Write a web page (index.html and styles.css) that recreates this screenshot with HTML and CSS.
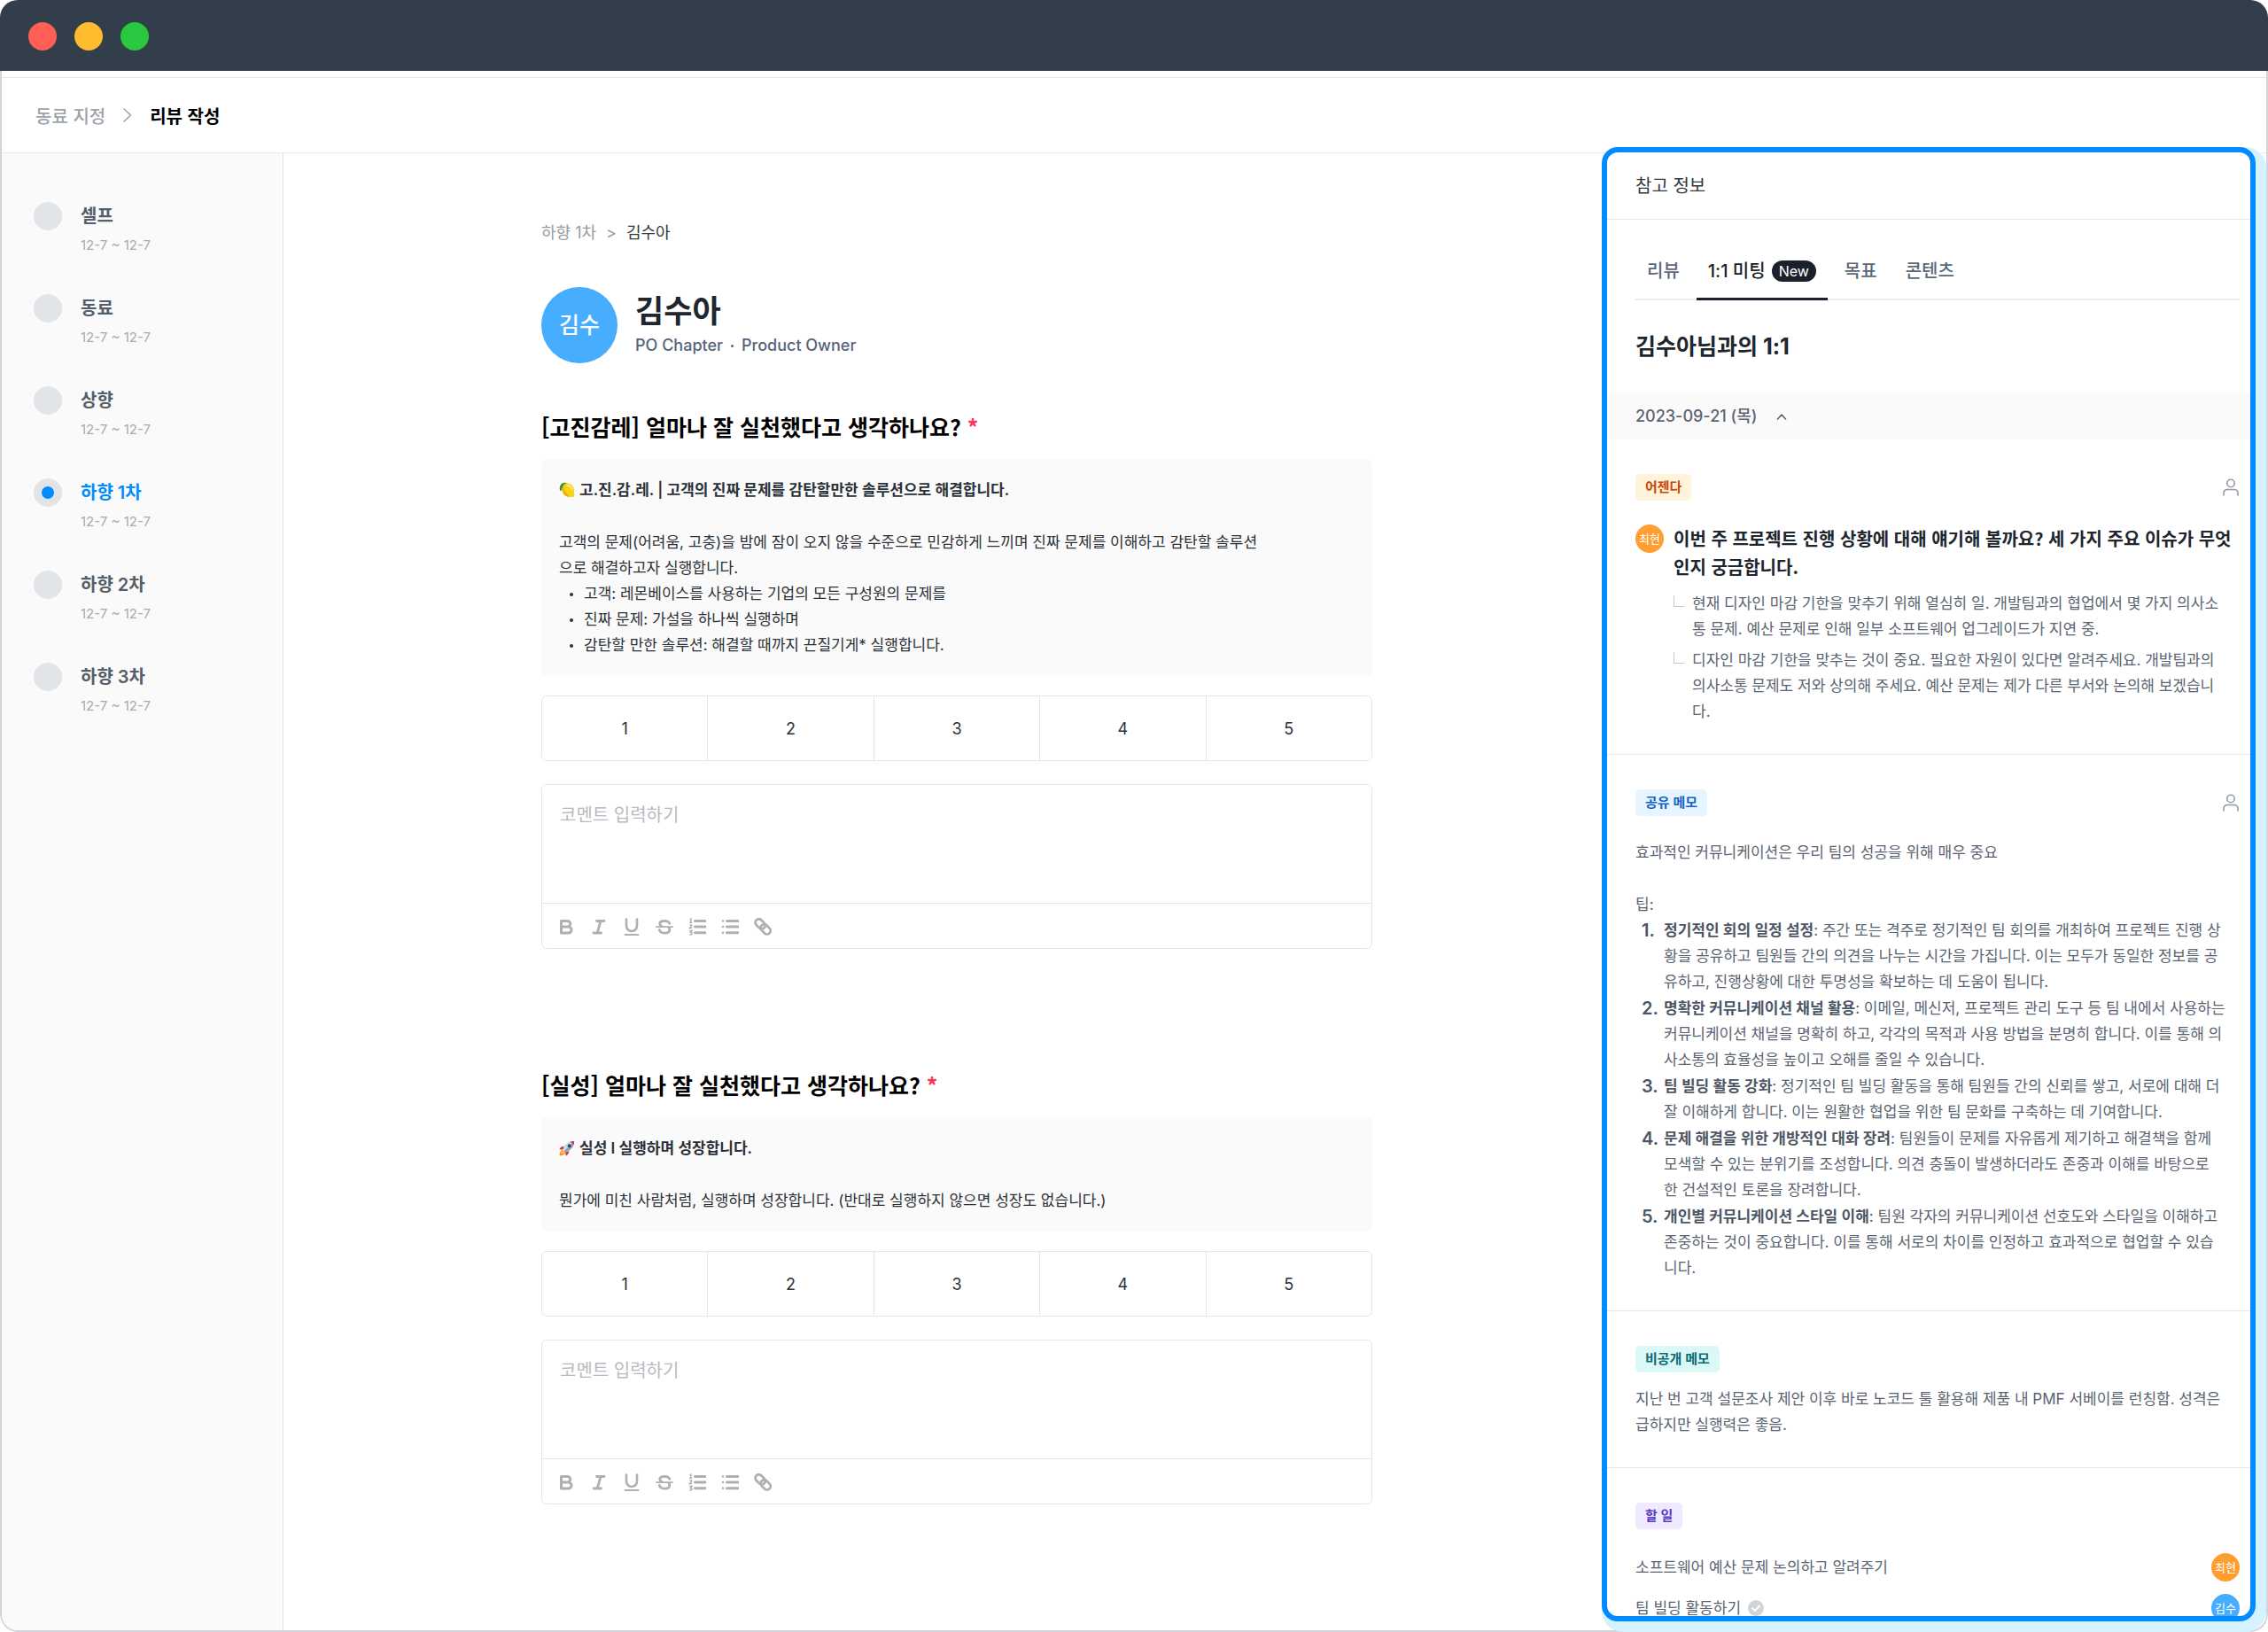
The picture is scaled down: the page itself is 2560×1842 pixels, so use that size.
FILE: index.html
```html
<!DOCTYPE html>
<html lang="ko">
<head>
    <meta charset="UTF-8">
    <meta name="viewport" content="width=device-width, initial-scale=1.0">
    <title>리뷰 작성</title>
    <link rel="stylesheet" href="styles.css">
</head>
<body>

    <!-- 공용 아이콘 -->
    <svg class="sprite" aria-hidden="true">
        <symbol id="icon-bold" viewBox="0 0 20 20"><path d="M4.500 3.500h7a3.300 3.300 0 0 1 0 6.600h-7zM4.500 10.100h8a3.500 3.500 0 0 1 0 7h-8z" fill="none" stroke="currentColor" stroke-width="3" stroke-linejoin="round"/></symbol>
        <symbol id="icon-italic" viewBox="0 0 20 20"><path d="M7.500 3.500h8.500M4 17h8.500M12 3.500L8.200 17" fill="none" stroke="currentColor" stroke-width="2.800" stroke-linecap="round"/></symbol>
        <symbol id="icon-underline" viewBox="0 0 20 20"><path d="M4 1.500v7.500a6 6 0 0 0 12 0V1.500" fill="none" stroke="currentColor" stroke-width="2.600" stroke-linecap="round"/><path d="M2.500 19h15" stroke="currentColor" stroke-width="1.800" stroke-linecap="round"/></symbol>
        <symbol id="icon-strike" viewBox="0 0 20 20"><path d="M15.800 6.200C15 4.200 12.900 3.300 10.200 3.300 7 3.300 4.700 4.500 4.700 6.500c0 1.200.7 2.200 2 2.800M4.300 13.500c.6 2.300 2.900 3.600 5.900 3.600 3.200 0 5.600-1.400 5.600-3.700 0-.8-.2-1.400-.7-1.900" fill="none" stroke="currentColor" stroke-width="2.800" stroke-linecap="round"/><path d="M1 10.200h18" stroke="currentColor" stroke-width="1.800" stroke-linecap="round"/></symbol>
        <symbol id="icon-ol" viewBox="0 0 20 20"><path d="M7.500 3.500H19M7.500 10H19M7.500 16.800H19" stroke="currentColor" stroke-width="3" stroke-linecap="round"/><path d="M1.500 1.600l1.300-.6v4M1.200 5.200h3M1.300 8.200c1.300-.8 2.600-.2 2.500.8-.1.900-1.500 1.400-2.500 2.600H4M1.300 14.500H4l-1.500 1.800c2.300 0 2 2.700-.1 2.700-.5 0-.9-.1-1.200-.4" fill="none" stroke="currentColor" stroke-width="1.400"/></symbol>
        <symbol id="icon-ul" viewBox="0 0 20 20"><path d="M6.500 3.500H19M6.500 10H19M6.500 16.800H19" stroke="currentColor" stroke-width="3" stroke-linecap="round"/><circle cx="2" cy="3.500" r="1.300" fill="currentColor"/><circle cx="2" cy="10" r="1.300" fill="currentColor"/><circle cx="2" cy="16.800" r="1.300" fill="currentColor"/></symbol>
        <symbol id="icon-link" viewBox="0 0 20 20"><g transform="rotate(45 10 10)" fill="none" stroke="currentColor" stroke-width="2.800"><rect x="-.5" y="5.800" width="12.500" height="8" rx="4"/><rect x="8" y="5.800" width="12.500" height="8" rx="4"/></g></symbol>
        <symbol id="icon-person" viewBox="0 0 20 20"><circle cx="10" cy="5.500" r="4.200" fill="none" stroke="currentColor" stroke-width="1.600"/><path d="M2 19v-2.500a4 4 0 0 1 4-4h8a4 4 0 0 1 4 4V19" fill="none" stroke="currentColor" stroke-width="1.600" stroke-linecap="round"/></symbol>
    </svg>

    <div class="window">
        <div class="title-bar">
            <span class="light red"></span>
            <span class="light yellow"></span>
            <span class="light green"></span>
        </div>

        <div class="app">
            <header class="header">
                <a href="#" class="header-link">동료 지정</a>
                <svg class="header-arrow" viewBox="0 0 10 16"><path d="M1 1l7.500 7L1 15" fill="none" stroke="currentColor" stroke-width="1.600" stroke-linecap="round" stroke-linejoin="round"/></svg>
                <h1>리뷰 작성</h1>
            </header>

            <div class="layout">
                <nav class="sidebar">
                    <a href="#" class="step"><span class="step-dot"></span><span class="step-name">셀프</span><span class="step-date">12-7 ~ 12-7</span></a>
                    <a href="#" class="step"><span class="step-dot"></span><span class="step-name">동료</span><span class="step-date">12-7 ~ 12-7</span></a>
                    <a href="#" class="step"><span class="step-dot"></span><span class="step-name">상향</span><span class="step-date">12-7 ~ 12-7</span></a>
                    <a href="#" class="step active"><span class="step-dot"></span><span class="step-name">하향 1차</span><span class="step-date">12-7 ~ 12-7</span></a>
                    <a href="#" class="step"><span class="step-dot"></span><span class="step-name">하향 2차</span><span class="step-date">12-7 ~ 12-7</span></a>
                    <a href="#" class="step"><span class="step-dot"></span><span class="step-name">하향 3차</span><span class="step-date">12-7 ~ 12-7</span></a>
                </nav>

                <main class="main">
                    <div class="column">
                        <div class="breadcrumb"><a href="#">하향 1차</a><span>&gt;</span><strong>김수아</strong></div>

                        <div class="profile">
                            <span class="avatar large">김수</span>
                            <div>
                                <div class="profile-name">김수아</div>
                                <div class="profile-role"><span>PO Chapter</span><i></i><span>Product Owner</span></div>
                            </div>
                        </div>

                        <section class="question">
                            <h2>[고진감레] 얼마나 잘 실천했다고 생각하나요? <span class="required">*</span></h2>
                            <div class="guide">
                                <h3>
                                    <svg class="emoji" viewBox="0 0 20 20"><path d="M9.500 1.200C7 .2 4 .8 2.500 3 .5 5.500.3 8.500 1.500 11.500 3 11 4 9 5 7z" fill="#3f8f35"/><path d="M6 3.500C8.500 1 13.500 1.200 16.500 4.500c2.200 2.400 2.800 6 2.300 9.500.8 1.500.7 3.500-.5 4.500-1.300.8-2.600.6-3.800.1C10 19 6.500 17 4.800 13.500 3.200 10 3.500 6 6 3.500z" fill="#fbd21c"/><path d="M4.800 13.500C3.200 10 3.500 6 6 3.500c-.8 5 2.500 10.500 8.500 15.100C10 19 6.500 17 4.800 13.500z" fill="#eeb20f"/><path d="M11 4.500c2.500.3 4.500 2 5 4.500" stroke="#fff3a8" stroke-width="1.600" fill="none" stroke-linecap="round"/></svg>
                                    고.진.감.레. | 고객의 진짜 문제를 감탄할만한 솔루션으로 해결합니다.
                                </h3>
                                <p>고객의 문제(어려움, 고충)을 밤에 잠이 오지 않을 수준으로 민감하게 느끼며 진짜 문제를 이해하고 감탄할 솔루션<br>으로 해결하고자 실행합니다.</p>
                                <ul>
                                    <li>고객: 레몬베이스를 사용하는 기업의 모든 구성원의 문제를</li>
                                    <li>진짜 문제: 가설을 하나씩 실행하며</li>
                                    <li>감탄할 만한 솔루션: 해결할 때까지 끈질기게* 실행합니다.</li>
                                </ul>
                            </div>
                            <div class="rating" role="radiogroup" aria-label="고진감레 점수">
                                <label><input type="radio" name="score1">1</label>
                                <label><input type="radio" name="score1">2</label>
                                <label><input type="radio" name="score1">3</label>
                                <label><input type="radio" name="score1">4</label>
                                <label><input type="radio" name="score1">5</label>
                            </div>
                            <div class="editor">
                                <textarea placeholder="코멘트 입력하기" aria-label="고진감레 코멘트"></textarea>
                                <div class="toolbar">
                                    <button type="button" aria-label="굵게"><svg><use href="#icon-bold"/></svg></button>
                                    <button type="button" aria-label="기울임"><svg><use href="#icon-italic"/></svg></button>
                                    <button type="button" aria-label="밑줄"><svg><use href="#icon-underline"/></svg></button>
                                    <button type="button" aria-label="취소선"><svg><use href="#icon-strike"/></svg></button>
                                    <button type="button" aria-label="번호 목록"><svg><use href="#icon-ol"/></svg></button>
                                    <button type="button" aria-label="글머리 목록"><svg><use href="#icon-ul"/></svg></button>
                                    <button type="button" aria-label="링크"><svg><use href="#icon-link"/></svg></button>
                                </div>
                            </div>
                        </section>

                        <section class="question">
                            <h2>[실성] 얼마나 잘 실천했다고 생각하나요? <span class="required">*</span></h2>
                            <div class="guide">
                                <h3>
                                    <svg class="emoji" viewBox="0 0 20 20"><path d="M6 7.500C3.500 7.500 1.500 9 .5 11.500l5 .5zM12.500 14c0 2.500-1.500 4.500-4 5.500L8 14.500z" fill="#d9303a"/><path d="M4 12c-2 1.500-3.500 4-3.500 7.500 3-.2 6-1.500 7.500-3.500z" fill="#ff8a1e"/><path d="M4.500 13.500c-1 1-1.700 2-1.700 3.700 1.700-.1 2.700-.7 3.700-1.700z" fill="#ffd93b"/><path d="M19 1c-5 0-9 2-12 6.500L4.500 12 8 15.500l4.500-2.500C17 10 19 6 19 1z" fill="#8fa1b3"/><path d="M19 1c-5 0-9 2-12 6.500L4.500 12l1.700 1.700z" fill="#cddae5"/><path d="M19 1c-1.800 0-3.300.2-4.800.7l4.100 4.100c.5-1.500.7-3 .7-4.800z" fill="#d9303a"/><circle cx="13" cy="7" r="2.200" fill="#28496f"/></svg>
                                    실성 I 실행하며 성장합니다.
                                </h3>
                                <p>뭔가에 미친 사람처럼, 실행하며 성장합니다. (반대로 실행하지 않으면 성장도 없습니다.)</p>
                            </div>
                            <div class="rating" role="radiogroup" aria-label="실성 점수">
                                <label><input type="radio" name="score2">1</label>
                                <label><input type="radio" name="score2">2</label>
                                <label><input type="radio" name="score2">3</label>
                                <label><input type="radio" name="score2">4</label>
                                <label><input type="radio" name="score2">5</label>
                            </div>
                            <div class="editor">
                                <textarea placeholder="코멘트 입력하기" aria-label="실성 코멘트"></textarea>
                                <div class="toolbar">
                                    <button type="button" aria-label="굵게"><svg><use href="#icon-bold"/></svg></button>
                                    <button type="button" aria-label="기울임"><svg><use href="#icon-italic"/></svg></button>
                                    <button type="button" aria-label="밑줄"><svg><use href="#icon-underline"/></svg></button>
                                    <button type="button" aria-label="취소선"><svg><use href="#icon-strike"/></svg></button>
                                    <button type="button" aria-label="번호 목록"><svg><use href="#icon-ol"/></svg></button>
                                    <button type="button" aria-label="글머리 목록"><svg><use href="#icon-ul"/></svg></button>
                                    <button type="button" aria-label="링크"><svg><use href="#icon-link"/></svg></button>
                                </div>
                            </div>
                        </section>
                    </div>
                </main>

                <aside class="panel">
                    <div class="panel-header">참고 정보</div>

                    <div class="tabs">
                        <button type="button" class="tab">리뷰</button>
                        <button type="button" class="tab active">1:1 미팅 <span class="badge">New</span></button>
                        <button type="button" class="tab">목표</button>
                        <button type="button" class="tab">콘텐츠</button>
                    </div>

                    <h2 class="panel-title">김수아님과의 1:1</h2>

                    <button type="button" class="date-row">
                        2023-09-21 (목)
                        <svg viewBox="0 0 12 8"><path d="M1.500 7L6 2l4.500 5" fill="none" stroke="currentColor" stroke-width="1.600" stroke-linecap="round" stroke-linejoin="round"/></svg>
                    </button>

                    <section class="memo">
                        <div class="memo-top">
                            <span class="tag orange">어젠다</span>
                            <svg class="person"><use href="#icon-person"/></svg>
                        </div>
                        <div class="agenda">
                            <span class="avatar small orange">최현</span>
                            <div>
                                <h3>이번 주 프로젝트 진행 상황에 대해 얘기해 볼까요? 세 가지 주요 이슈가 무엇<br>인지 궁금합니다.</h3>
                                <ul class="replies">
                                    <li>현재 디자인 마감 기한을 맞추기 위해 열심히 일. 개발팀과의 협업에서 몇 가지 의사소<br>통 문제. 예산 문제로 인해 일부 소프트웨어 업그레이드가 지연 중.</li>
                                    <li>디자인 마감 기한을 맞추는 것이 중요. 필요한 자원이 있다면 알려주세요. 개발팀과의<br>의사소통 문제도 저와 상의해 주세요. 예산 문제는 제가 다른 부서와 논의해 보겠습니<br>다.</li>
                                </ul>
                            </div>
                        </div>
                    </section>

                    <section class="memo">
                        <div class="memo-top">
                            <span class="tag blue">공유 메모</span>
                            <svg class="person"><use href="#icon-person"/></svg>
                        </div>
                        <p class="intro">효과적인 커뮤니케이션은 우리 팀의 성공을 위해 매우 중요</p>
                        <p>팁:</p>
                        <ol class="tips">
                            <li><div><strong>정기적인 회의 일정 설정</strong>: 주간 또는 격주로 정기적인 팀 회의를 개최하여 프로젝트 진행 상<br>황을 공유하고 팀원들 간의 의견을 나누는 시간을 가집니다. 이는 모두가 동일한 정보를 공<br>유하고, 진행상황에 대한 투명성을 확보하는 데 도움이 됩니다.</div></li>
                            <li><div><strong>명확한 커뮤니케이션 채널 활용</strong>: 이메일, 메신저, 프로젝트 관리 도구 등 팀 내에서 사용하는<br>커뮤니케이션 채널을 명확히 하고, 각각의 목적과 사용 방법을 분명히 합니다. 이를 통해 의<br>사소통의 효율성을 높이고 오해를 줄일 수 있습니다.</div></li>
                            <li><div><strong>팀 빌딩 활동 강화</strong>: 정기적인 팀 빌딩 활동을 통해 팀원들 간의 신뢰를 쌓고, 서로에 대해 더<br>잘 이해하게 합니다. 이는 원활한 협업을 위한 팀 문화를 구축하는 데 기여합니다.</div></li>
                            <li><div><strong>문제 해결을 위한 개방적인 대화 장려</strong>: 팀원들이 문제를 자유롭게 제기하고 해결책을 함께<br>모색할 수 있는 분위기를 조성합니다. 의견 충돌이 발생하더라도 존중과 이해를 바탕으로<br>한 건설적인 토론을 장려합니다.</div></li>
                            <li><div><strong>개인별 커뮤니케이션 스타일 이해</strong>: 팀원 각자의 커뮤니케이션 선호도와 스타일을 이해하고<br>존중하는 것이 중요합니다. 이를 통해 서로의 차이를 인정하고 효과적으로 협업할 수 있습<br>니다.</div></li>
                        </ol>
                    </section>

                    <section class="memo private">
                        <div class="memo-top"><span class="tag teal">비공개 메모</span></div>
                        <p>지난 번 고객 설문조사 제안 이후 바로 노코드 툴 활용해 제품 내 PMF 서베이를 런칭함. 성격은<br>급하지만 실행력은 좋음.</p>
                    </section>

                    <section class="memo">
                        <div class="memo-top"><span class="tag purple">할 일</span></div>
                        <ul class="todos">
                            <li><span>소프트웨어 예산 문제 논의하고 알려주기</span><span class="avatar small orange">최현</span></li>
                            <li>
                                <span>팀 빌딩 활동하기</span>
                                <svg class="check" viewBox="0 0 18 18"><circle cx="9" cy="9" r="9" fill="#cfd4d8"/><path d="M5 9.200l2.800 2.800L13 6.500" fill="none" stroke="#fff" stroke-width="2" stroke-linecap="round" stroke-linejoin="round"/></svg>
                                <span class="avatar small">김수</span>
                            </li>
                        </ul>
                    </section>
                </aside>
            </div>
        </div>
    </div>

</body>
</html>
```

FILE: styles.css
```css
* {
    box-sizing: border-box;
}
body {
    margin: 0;
    background: #fff;
    color: #2b3138;
    font-family: Inter, "Noto Sans CJK KR", sans-serif;
    font-size: 17px;
    line-height: 29px;
}
h1, h2, h3, p, ul, ol {
    margin: 0;
    padding: 0;
}
ul, ol {
    list-style: none;
}
a {
    color: inherit;
    text-decoration: none;
}
button {
    padding: 0;
    border: none;
    background: none;
    color: inherit;
    font: inherit;
    cursor: pointer;
}
.sprite {
    display: none;
}

/* 창 */
.window {
    display: flex;
    flex-direction: column;
    height: 100vh;
    border-radius: 20px;
    overflow: hidden;
}
.title-bar {
    display: flex;
    flex-shrink: 0;
    align-items: center;
    gap: 20px;
    height: 80px;
    padding: 2px 32px 0;
    background: #323f4b;
}
.light {
    width: 32px;
    height: 32px;
    border-radius: 50%;
}
.light.red {
    background: #ff5f57;
}
.light.yellow {
    background: #febc2e;
}
.light.green {
    background: #28c840;
}
.app {
    display: flex;
    flex: 1;
    flex-direction: column;
    min-height: 0;
    padding-top: 7px;
    border: 2px solid #d3d3dd;
    border-top: none;
    border-radius: 0 0 20px 20px;
}
.header {
    display: flex;
    flex-shrink: 0;
    align-items: center;
    gap: 20px;
    height: 86px;
    padding: 0 38px;
    border: solid #e6e9eb;
    border-width: 1px 0;
    font-family: "Noto Sans CJK KR", sans-serif;
    font-size: 20px;
}
.header-link {
    color: #9ba3ae;
    font-weight: 500;
}
.header-arrow {
    width: 10px;
    height: 16px;
    color: #9ba3ae;
}
.header h1 {
    color: #000;
    font-size: 20px;
    font-weight: 600;
}
.layout {
    display: flex;
    flex: 1;
    min-height: 0;
}

/* 리뷰 단계 */
.sidebar {
    display: flex;
    flex-direction: column;
    flex-shrink: 0;
    gap: 38px;
    width: 318px;
    padding: 55px 36px;
    border-right: 1px solid #e3e6e8;
    border-radius: 0 0 0 18px;
    background: #fafafa;
}
.step {
    display: grid;
    grid-template-columns: 32px 1fr;
    column-gap: 21px;
}
.step-dot {
    display: flex;
    align-items: center;
    justify-content: center;
    height: 32px;
    border-radius: 50%;
    background: #e2e5e7;
}
.step.active .step-dot::after {
    content: "";
    width: 14px;
    height: 14px;
    border-radius: 50%;
    background: #008cff;
}
.step-name {
    color: #545e69;
    font-size: 20px;
    font-weight: 600;
    line-height: 32px;
}
.step.active .step-name {
    color: #008cff;
}
.step-date {
    grid-column: 2;
    color: #a7abaf;
    font-size: 15px;
    line-height: 34px;
}

/* 본문 */
.main {
    flex: 1;
    min-width: 0;
    padding: 75px 0 0 32px;
}
.column {
    max-width: 938px;
    margin: 0 auto;
}
.breadcrumb {
    display: flex;
    gap: 11px;
    color: #989b9e;
    font-size: 18px;
}
.breadcrumb strong {
    color: #33383d;
    font-weight: 400;
}
.profile {
    display: flex;
    align-items: center;
    gap: 20px;
    margin: 47px 0 52px;
}
.avatar {
    display: flex;
    flex-shrink: 0;
    align-items: center;
    justify-content: center;
    border-radius: 50%;
    background: #47adff;
    color: #fff;
}
.avatar.large {
    width: 86px;
    height: 86px;
    font-size: 25px;
    font-weight: 500;
}
.avatar.small {
    width: 32px;
    height: 32px;
    font-size: 13px;
}
.avatar.orange {
    background: #ff9f33;
}
.profile-name {
    color: #1f262e;
    font-size: 35px;
    font-weight: 700;
    line-height: 46px;
}
.profile-role {
    display: flex;
    align-items: center;
    gap: 9px;
    color: #56637a;
    font-size: 18px;
    font-weight: 500;
    line-height: 32px;
}
.profile-role i {
    width: 3px;
    height: 3px;
    border-radius: 50%;
    background: #56637a;
}
.question {
    margin-bottom: 134px;
}
.question h2 {
    margin-bottom: 18px;
    color: #000;
    font-family: "Noto Sans CJK KR", sans-serif;
    font-size: 25px;
    font-weight: 700;
    line-height: 38px;
}
.required {
    color: #ff3355;
}
.guide {
    margin-bottom: 22px;
    padding: 20px;
    border-radius: 6px;
    background: #fafafa;
}
.guide h3 {
    display: flex;
    align-items: center;
    gap: 5px;
    margin-bottom: 30px;
    font-size: 17px;
    font-weight: 600;
    line-height: 30px;
}
.emoji {
    width: 18px;
    height: 18px;
}
.guide li {
    display: flex;
    align-items: center;
    gap: 12px;
    padding-left: 12px;
}
.guide li::before {
    content: "";
    width: 4px;
    height: 4px;
    border-radius: 50%;
    background: #2b3138;
}
.rating {
    display: flex;
    height: 74px;
    margin-bottom: 26px;
    border: 1px solid #e2e6e8;
    border-radius: 6px;
}
.rating label {
    display: flex;
    flex: 1;
    align-items: center;
    justify-content: center;
    font-size: 18px;
    cursor: pointer;
}
.rating label + label {
    border-left: 1px solid #e2e6e8;
}
.rating input {
    width: 0;
    height: 0;
    margin: 0;
    appearance: none;
}
.editor {
    border: 1px solid #e2e6e8;
    border-radius: 6px;
}
.editor textarea {
    display: block;
    width: 100%;
    height: 133px;
    padding: 18px 20px;
    border: none;
    background: none;
    font: inherit;
    font-size: 20px;
    line-height: 32px;
    resize: none;
}
.editor textarea::placeholder {
    color: #b7bbbf;
}
.toolbar {
    display: flex;
    align-items: center;
    gap: 17px;
    height: 51px;
    padding: 2px 17px 0;
    border-top: 1px solid #e2e6e8;
    color: #b0b0b0;
}
.toolbar button, .toolbar svg {
    display: block;
    width: 20px;
    height: 20px;
}

/* 참고 정보 */
.panel {
    flex-shrink: 0;
    width: 738px;
    margin: -7px 12px 10px 0;
    border: 6px solid #008cff;
    border-radius: 18px;
    background: #fff;
    box-shadow: 6px 6px 0 6px #d4f2ff;
    color: #5a6472;
    overflow: hidden;
}
.panel-header {
    padding: 2px 32px 0;
    border-bottom: 1px solid #e6e8ea;
    color: #33383d;
    font-size: 20px;
    line-height: 73px;
}
.tabs {
    display: flex;
    gap: 6px;
    margin: 26px 12px 0 32px;
    border-bottom: 2px solid #eaeced;
}
.tab {
    display: flex;
    align-items: center;
    gap: 7px;
    height: 65px;
    margin-bottom: -2px;
    padding: 2px 13px 0;
    border-bottom: 3px solid transparent;
    color: #5b6878;
    font-size: 20px;
    font-weight: 500;
}
.tab.active {
    border-color: #1b202b;
    color: #1b202b;
}
.badge {
    padding: 0 8px;
    border-radius: 12px;
    background: #1b202b;
    color: #fff;
    font-size: 16px;
    font-weight: 400;
    line-height: 24px;
}
.panel-title {
    margin: 33px 32px;
    color: #20262d;
    font-size: 25px;
    font-weight: 700;
    line-height: 38px;
}
.date-row {
    display: flex;
    align-items: center;
    gap: 22px;
    width: 100%;
    height: 53px;
    padding: 0 32px;
    background: #fafafa;
    font-size: 18px;
    font-weight: 500;
}
.date-row svg {
    width: 12px;
    height: 8px;
}
.memo {
    padding: 39px 0 33px;
    border-bottom: 1px solid #e6e8ea;
}
.memo p {
    padding: 0 12px 0 32px;
}
.memo-top {
    display: flex;
    align-items: center;
    justify-content: space-between;
    margin-bottom: 27px;
    padding: 0 12px 0 32px;
}
.memo.private .memo-top {
    margin-bottom: 16px;
}
.tag {
    padding: 0 11px;
    border-radius: 5px;
    font-size: 15px;
    font-weight: 600;
    line-height: 30px;
}
.tag.orange {
    background: #fff3da;
    color: #c9480b;
}
.tag.blue {
    background: #e6f5ff;
    color: #1464c8;
}
.tag.teal {
    background: #d9f8f6;
    color: #0c6a75;
}
.tag.purple {
    background: #efeaff;
    color: #5a3cc4;
}
.person {
    width: 20px;
    height: 20px;
    color: #949ca5;
}
.agenda {
    display: flex;
    gap: 11px;
    padding: 0 12px 0 32px;
}
.agenda h3 {
    margin-bottom: 11px;
    color: #20262d;
    font-family: "Noto Sans CJK KR", sans-serif;
    font-size: 20px;
    font-weight: 600;
    line-height: 32px;
}
.replies li {
    position: relative;
    padding-left: 21px;
}
.replies li + li {
    margin-top: 6px;
}
.replies li::before {
    content: "";
    position: absolute;
    top: 5px;
    left: 0;
    width: 11px;
    height: 12px;
    border: solid #c3c8cd;
    border-width: 0 0 1px 1px;
}
.intro {
    margin-bottom: 30px;
}
.tips {
    padding: 0 12px 0 39px;
    counter-reset: tip;
}
.tips li {
    display: flex;
    counter-increment: tip;
}
.tips li + li {
    margin-top: 1px;
}
.tips li::before {
    content: counter(tip) ".";
    flex-shrink: 0;
    width: 25px;
    color: #4c5665;
    font-size: 20px;
    font-weight: 600;
}
.tips strong {
    color: #4c5665;
    font-weight: 600;
}
.todos {
    display: flex;
    flex-direction: column;
    gap: 14px;
    padding: 0 12px 0 32px;
}
.todos li {
    display: flex;
    align-items: center;
    gap: 8px;
}
.todos .avatar {
    margin-left: auto;
}
.check {
    width: 18px;
    height: 18px;
}
```
